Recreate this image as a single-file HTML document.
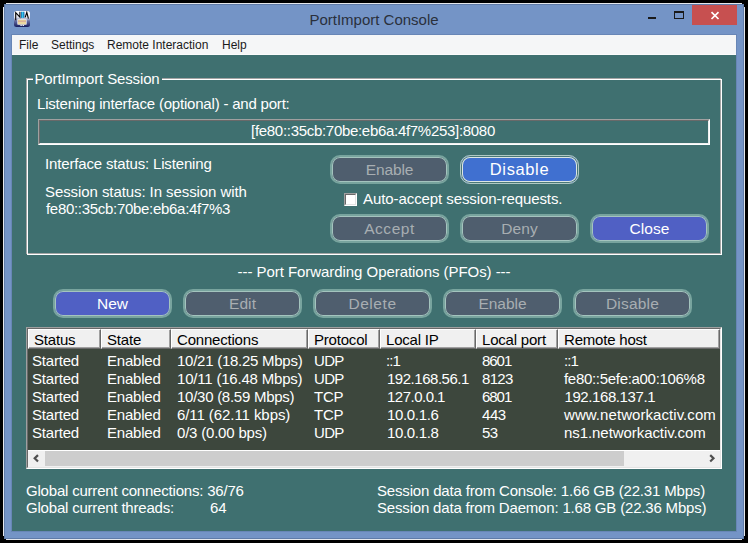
<!DOCTYPE html>
<html><head><meta charset="utf-8"><title>PortImport Console</title>
<style>
html,body{margin:0;padding:0;background:#000;}
body{width:748px;height:543px;position:relative;overflow:hidden;font-family:"Liberation Sans",sans-serif;}
.abs{position:absolute;white-space:nowrap;}
#win2{left:4px;top:4px;width:740px;height:535px;background:#5f7ba8;}
#win{left:5px;top:5px;width:738px;height:533px;background:#7494c6;}
#title{left:4px;top:3px;width:740px;height:32px;line-height:34px;text-align:center;font-size:15px;color:#2a303c;}
#cframe{left:11px;top:34px;width:726px;height:498px;background:#6886b6;}
#menubar{left:12px;top:35px;width:724px;height:20px;background:#f5f6f7;box-sizing:border-box;border-bottom:1px solid #fcfcfc;}
.menu{top:35px;height:20px;line-height:21px;font-size:12px;color:#1a1a1a;}
#client{left:12px;top:55px;width:724px;height:476px;background:#3f7070;}
.t{color:#fff;font-size:15px;line-height:17px;height:17px;letter-spacing:-0.2px;}
.btn{box-sizing:border-box;width:119px;height:29px;border-radius:10px;text-align:center;font-size:15.5px;line-height:25px;}
.dis{background:#4f5e6e;border:2px solid #78a49e;box-shadow:inset 0 0 0 1px #a4c4be;color:#a8aeb2;}
.blue{background:#5060c4;border:2px solid #78a49e;box-shadow:inset 0 0 0 1px #a4c4be;color:#fff;}
.foc{background:#4070d0;border:1px solid #b0c8c4;box-shadow:inset 0 0 0 1px #4a7878,inset 0 0 0 2px #dce6e4;color:#fff;line-height:26px;font-size:16.5px;}
#close{left:692px;top:5px;width:45px;height:20px;background:#c75050;}
.hc{top:329px;height:20px;box-sizing:border-box;background:#f0f0f0;border-top:1px solid #fff;border-left:1px solid #fff;border-right:1px solid #696969;border-bottom:1px solid #696969;box-shadow:inset -1px -1px 0 #a0a0a0;padding-left:5px;line-height:20px;font-size:15px;color:#000;letter-spacing:-0.2px;}
.r{color:#fff;font-size:15px;line-height:18px;height:18px;letter-spacing:-0.2px;}
</style></head><body>
<div class="abs" style="left:6px;top:3px;width:736px;height:1px;background:#e4e7ec"></div>
<div class="abs" style="left:6px;top:539px;width:736px;height:1px;background:#e4e7ec"></div>
<div class="abs" style="left:3px;top:7px;width:1px;height:529px;background:#e4e7ec"></div>
<div class="abs" style="left:744px;top:7px;width:1px;height:529px;background:#e4e7ec"></div>
<div class="abs" id="win2"></div>
<div class="abs" id="win"></div>
<div class="abs" id="title">PortImport Console</div>
<svg class="abs" style="left:14px;top:11px" width="16" height="16" viewBox="0 0 16 16">
<defs><linearGradient id="ig" x1="0" y1="0" x2="0" y2="1"><stop offset="0" stop-color="#ffffff"/><stop offset="0.4" stop-color="#e0e2ee"/><stop offset="0.62" stop-color="#6870a4"/><stop offset="1" stop-color="#151a5c"/></linearGradient>
<linearGradient id="cg" x1="0" y1="0" x2="1" y2="0"><stop offset="0" stop-color="#0a58a8"/><stop offset="0.4" stop-color="#38d0f0"/><stop offset="1" stop-color="#0a58a8"/></linearGradient>
<radialGradient id="lg" cx="0.5" cy="0.5" r="0.6"><stop offset="0" stop-color="#f4f4fa" stop-opacity="0.9"/><stop offset="1" stop-color="#f4f4fa" stop-opacity="0"/></radialGradient></defs>
<rect x="0" y="0" width="16" height="16" rx="2.5" fill="url(#ig)"/>
<rect x="3" y="7.5" width="10" height="7" fill="url(#lg)"/>
<path d="M1.7 9.3V1.6L5.9 6.2V0.8" stroke="#000" stroke-width="1.1" fill="none"/>
<rect x="7" y="0.7" width="3.4" height="6.2" fill="url(#cg)"/>
<path d="M11.2 6.3L12.8 1.3L14.4 7.6" stroke="#000" stroke-width="1.1" fill="none"/>
<rect x="3.4" y="8.2" width="9.2" height="5.4" fill="#f0f0f4"/>
<rect x="4" y="8.8" width="8" height="4.4" fill="#e6cf90"/>
<rect x="4" y="9.8" width="8" height="0.9" fill="#d8a49c"/>
<rect x="4" y="11.6" width="8" height="0.9" fill="#f2e4b4"/>
<rect x="6.4" y="14" width="1.4" height="0.9" fill="#fff"/><rect x="8.6" y="14" width="1.4" height="0.9" fill="#fff"/>
</svg>
<div class="abs" style="left:648px;top:17px;width:8px;height:2px;background:#1a1a1a"></div>
<div class="abs" style="left:674px;top:11px;width:8px;height:5px;border:1px solid #1a1a1a;border-top:2px solid #1a1a1a"></div>
<div class="abs" id="close"></div>
<svg class="abs" style="left:710px;top:11px" width="10" height="9" viewBox="0 0 10 9"><path d="M1.5 1.2L8.5 8M8.5 1.2L1.5 8" stroke="#fff" stroke-width="1.7" fill="none"/></svg>
<div class="abs" id="cframe"></div>
<div class="abs" id="menubar"></div>
<div class="abs menu" style="left:19px">File</div>
<div class="abs menu" style="left:51px">Settings</div>
<div class="abs menu" style="left:107px">Remote Interaction</div>
<div class="abs menu" style="left:222px">Help</div>
<div class="abs" id="client"></div>

<!-- group box -->
<div class="abs" style="left:26px;top:78px;width:693px;height:174px;border:1px solid #a4a4a4;"></div>
<div class="abs" style="left:27px;top:79px;width:693px;height:174px;border:1px solid #fff;"></div>
<div class="abs t" id="t1" style="letter-spacing:-0.14px;left:32.5px;top:70px;background:#3f7070;padding:0 2px;">PortImport Session</div>
<div class="abs t" id="t2" style="left:37px;top:95px;">Listening interface (optional) - and port:</div>
<div class="abs" style="left:38px;top:119px;width:670px;height:24px;border:1px solid #fff;border-top-color:#a0a0a0;border-left-color:#a0a0a0;"></div>
<div class="abs t" id="t3" style="left:39px;top:120px;text-indent:-2px;width:668px;height:22px;line-height:19px;letter-spacing:-0.3px;text-align:center;border:1px solid #f0f0f0;border-top-color:#696969;border-left-color:#696969;">[fe80::35cb:70be:eb6a:4f7%253]:8080</div>
<div class="abs t" id="t4" style="left:45px;top:155px;letter-spacing:-0.16px;">Interface status: Listening</div>
<div class="abs t" id="t5" style="left:45px;top:183px;letter-spacing:-0.08px;">Session status: In session with</div>
<div class="abs t" id="t6" style="left:46px;top:200px;letter-spacing:-0.3px;">fe80::35cb:70be:eb6a:4f7%3</div>

<div class="abs btn dis" id="b1" style="left:330px;top:155px;letter-spacing:-0.11px;">Enable</div>
<div class="abs btn foc" id="b2" style="left:460px;top:155px;letter-spacing:0.62px;">Disable</div>
<div class="abs" style="left:344px;top:193px;width:11px;height:11px;border:1px solid #fff;border-top-color:#a0a0a0;border-left-color:#a0a0a0;"></div><div class="abs" style="left:345px;top:194px;width:9px;height:9px;background:#fff;border:1px solid #e3e3e3;border-top-color:#696969;border-left-color:#696969;"></div>
<div class="abs t" id="t7" style="left:363px;top:190px;letter-spacing:-0.08px;">Auto-accept session-requests.</div>
<div class="abs btn dis" id="b3" style="left:330px;top:214px;letter-spacing:0.54px;">Accept</div>
<div class="abs btn dis" id="b4" style="left:460px;top:214px;letter-spacing:0.09px;">Deny</div>
<div class="abs btn blue" id="b5" style="left:590px;top:214px;letter-spacing:0.12px;">Close</div>

<div class="abs t" id="t8" style="left:12px;top:263px;width:724px;text-align:center;letter-spacing:-0.05px;">--- Port Forwarding Operations (PFOs) ---</div>
<div class="abs btn blue" id="b6" style="left:53px;top:289px;letter-spacing:0.07px;">New</div>
<div class="abs btn dis" id="b7" style="left:183px;top:289px;letter-spacing:0.10px;">Edit</div>
<div class="abs btn dis" id="b8" style="left:313px;top:289px;letter-spacing:0.57px;">Delete</div>
<div class="abs btn dis" id="b9" style="left:443px;top:289px;letter-spacing:-0.01px;">Enable</div>
<div class="abs btn dis" id="b10" style="left:573px;top:289px;letter-spacing:0.20px;">Disable</div>

<!-- list -->
<div class="abs" style="left:26px;top:327px;width:694px;height:140px;border:1px solid #fff;border-top-color:#a0a0a0;border-left-color:#a0a0a0;"></div>
<div class="abs" style="left:27px;top:328px;width:692px;height:138px;background:#3d473d;border:1px solid #e3e3e3;border-top-color:#696969;border-left-color:#696969;"></div>
<div class="abs hc" style="left:28px;width:73px;">Status</div>
<div class="abs hc" style="left:101px;width:70px;">State</div>
<div class="abs hc" style="left:171px;width:137px;">Connections</div>
<div class="abs hc" style="left:308px;width:72px;">Protocol</div>
<div class="abs hc" style="left:380px;width:96px;">Local IP</div>
<div class="abs hc" style="left:476px;width:82px;">Local port</div>
<div class="abs hc" style="left:558px;width:162px;">Remote host</div>
<!-- rows -->
<div class="abs r" id="st0" style="left:32px;top:352px;letter-spacing:-0.2px">Started</div>
<div class="abs r" id="st1" style="left:32px;top:370px;letter-spacing:-0.2px">Started</div>
<div class="abs r" id="st2" style="left:32px;top:388px;letter-spacing:-0.2px">Started</div>
<div class="abs r" id="st3" style="left:32px;top:406px;letter-spacing:-0.2px">Started</div>
<div class="abs r" id="st4" style="left:32px;top:424px;letter-spacing:-0.2px">Started</div>
<div class="abs r" id="en0" style="left:107px;top:352px;letter-spacing:-0.2px">Enabled</div>
<div class="abs r" id="en1" style="left:107px;top:370px;letter-spacing:-0.2px">Enabled</div>
<div class="abs r" id="en2" style="left:107px;top:388px;letter-spacing:-0.2px">Enabled</div>
<div class="abs r" id="en3" style="left:107px;top:406px;letter-spacing:-0.2px">Enabled</div>
<div class="abs r" id="en4" style="left:107px;top:424px;letter-spacing:-0.2px">Enabled</div>
<div class="abs r" id="cn0" style="left:177px;top:352px;letter-spacing:-0.259px">10/21 (18.25 Mbps)</div>
<div class="abs r" id="cn1" style="left:177px;top:370px;letter-spacing:-0.2px">10/11 (16.48 Mbps)</div>
<div class="abs r" id="cn2" style="left:177px;top:388px;letter-spacing:-0.263px">10/30 (8.59 Mbps)</div>
<div class="abs r" id="cn3" style="left:177px;top:406px;letter-spacing:-0.075px">6/11 (62.11 kbps)</div>
<div class="abs r" id="cn4" style="left:177px;top:424px;letter-spacing:-0.2px">0/3 (0.00 bps)</div>
<div class="abs r" id="pr0" style="left:314px;top:352px;letter-spacing:-0.7px">UDP</div>
<div class="abs r" id="pr1" style="left:314px;top:370px;letter-spacing:-0.7px">UDP</div>
<div class="abs r" id="pr2" style="left:314px;top:388px;letter-spacing:-0.2px">TCP</div>
<div class="abs r" id="pr3" style="left:314px;top:406px;letter-spacing:-0.2px">TCP</div>
<div class="abs r" id="pr4" style="left:314px;top:424px;letter-spacing:-0.7px">UDP</div>
<div class="abs r" id="ip0" style="left:386px;top:352px;letter-spacing:-0.95px">::1</div>
<div class="abs r" id="ip1" style="left:387px;top:370px;letter-spacing:-0.473px">192.168.56.1</div>
<div class="abs r" id="ip2" style="left:387px;top:388px;letter-spacing:-0.512px">127.0.0.1</div>
<div class="abs r" id="ip3" style="left:387px;top:406px;letter-spacing:-0.343px">10.0.1.6</div>
<div class="abs r" id="ip4" style="left:387px;top:424px;letter-spacing:-0.343px">10.0.1.8</div>
<div class="abs r" id="po0" style="left:482px;top:352px;letter-spacing:-1.033px">8601</div>
<div class="abs r" id="po1" style="left:482px;top:370px;letter-spacing:-0.7px">8123</div>
<div class="abs r" id="po2" style="left:482px;top:388px;letter-spacing:-1.033px">6801</div>
<div class="abs r" id="po3" style="left:482px;top:406px;letter-spacing:-0.45px">443</div>
<div class="abs r" id="po4" style="left:482px;top:424px;letter-spacing:-0.7px">53</div>
<div class="abs r" id="rh0" style="left:564px;top:352px;letter-spacing:-0.95px">::1</div>
<div class="abs r" id="rh1" style="left:564px;top:370px;letter-spacing:-0.305px">fe80::5efe:a00:106%8</div>
<div class="abs r" id="rh2" style="left:564.5px;top:388px;letter-spacing:-0.408px">192.168.137.1</div>
<div class="abs r" id="rh3" style="left:564px;top:406px;letter-spacing:0.063px">www.networkactiv.com</div>
<div class="abs r" id="rh4" style="left:564px;top:424px;letter-spacing:-0.068px">ns1.networkactiv.com</div>
<!-- /rows -->
<!-- scrollbar -->
<div class="abs" style="left:28px;top:450px;width:692px;height:17px;background:#f0f0f0;border-top:1px solid #fff;box-sizing:border-box;"></div>
<div class="abs" style="left:45px;top:451px;width:579px;height:15px;background:#cdcdcd;"></div>
<svg class="abs" style="left:32px;top:454px" width="8" height="9" viewBox="0 0 8 9"><path d="M6 1.1L2.7 4.3L6 7.5" stroke="#505050" stroke-width="2.2" fill="none"/></svg>
<svg class="abs" style="left:708px;top:454px" width="8" height="9" viewBox="0 0 8 9"><path d="M2.2 1.1L5.5 4.3L2.2 7.5" stroke="#505050" stroke-width="2.2" fill="none"/></svg>

<div class="abs t" id="t9" style="left:26px;top:482px;">Global current connections: 36/76</div>
<div class="abs t" id="t10" style="left:26px;top:499px;">Global current threads:</div>
<div class="abs t" id="t11" style="left:210px;top:499px;">64</div>
<div class="abs t" id="t12" style="left:377px;top:482px;letter-spacing:-0.17px;">Session data from Console: 1.66 GB (22.31 Mbps)</div>
<div class="abs t" id="t13" style="left:377px;top:499px;letter-spacing:-0.18px;">Session data from Daemon: 1.68 GB (22.36 Mbps)</div>
</body></html>
